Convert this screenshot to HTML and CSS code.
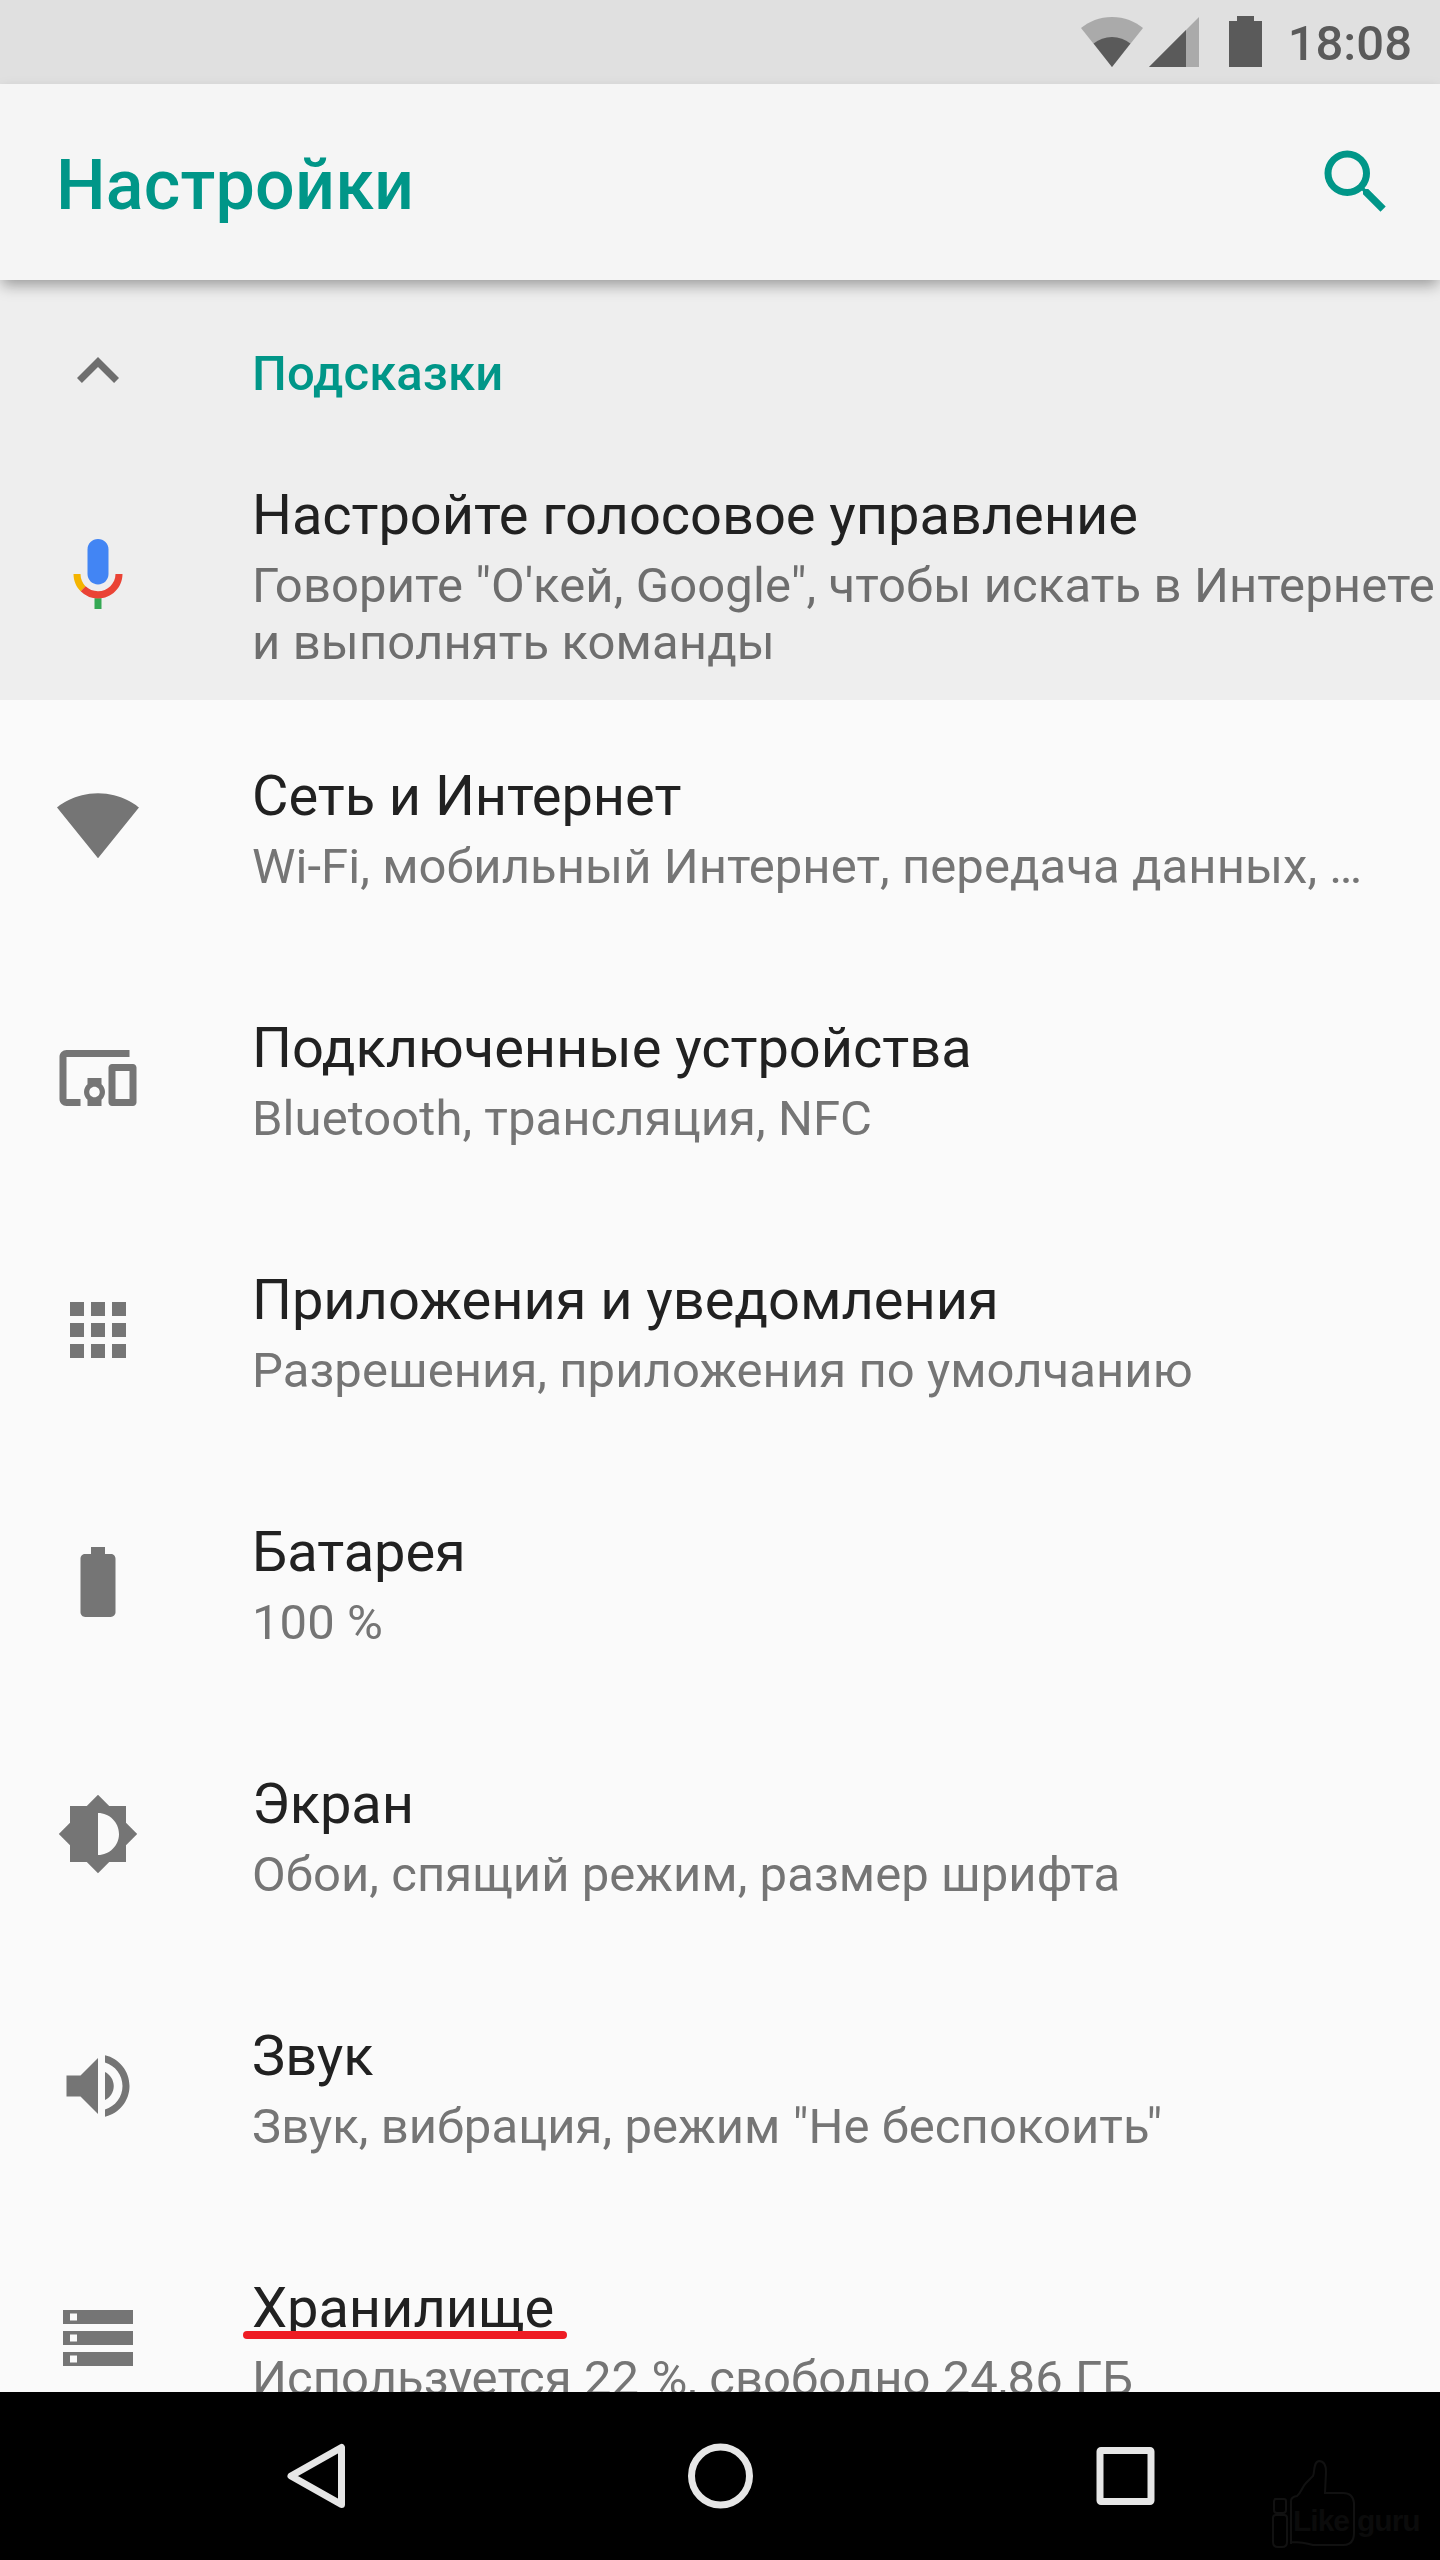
FILE: index.html
```html
<!DOCTYPE html>
<html lang="ru">
<head>
<meta charset="utf-8">
<title>Настройки</title>
<link rel="stylesheet" href="styles.css">
</head>
<body>
<div class="screen">
  <div class="status">
    <svg class="status-wifi" viewBox="0 0 62 50"><path class="dim" d="M31 50L0 11C8 4.500 18.500 0 31 0s23 4.500 31 11z"/><path d="M31 50L12.600 26.500C18 22.300 24 20 31 20s13 2.300 18.400 6.500z"/></svg>
    <svg class="status-cell" viewBox="0 0 50 50"><path class="dim" d="M0 50L50 0v50z"/><path d="M0 50L37 13v37z"/></svg>
    <svg class="status-battery" viewBox="0 0 33 51"><path d="M0 5h8V0h17v5h8v46H0z"/></svg>
    <span class="clock">18:08</span>
  </div>
  <header class="appbar">
    <h1 class="appbar-title">Настройки</h1>
    <svg class="icon search" viewBox="0 0 24 24"><path d="M15.500 14h-.79l-.28-.27A6.471 6.471 0 0 0 16 9.500 6.500 6.500 0 1 0 9.500 16c1.610 0 3.090-.59 4.230-1.570l.27.28v.79l5 4.990L20.490 19l-4.990-5zm-6 0C7.010 14 5 11.990 5 9.500S7.010 5 9.500 5 14 7.010 14 9.500 11.990 14 9.500 14z"/></svg>
  </header>
  <main class="content">
    <section class="tips">
      <div class="tips-head">
        <svg class="icon" viewBox="0 0 24 24"><path d="M12 8l-6 6 1.410 1.410L12 10.830l4.590 4.580L18 14z"/></svg>
        <h2 class="tips-title">Подсказки</h2>
      </div>
      <div class="tip">
        <svg class="icon" viewBox="0 0 24 24">
          <path fill="#4285f4" d="M12 15c1.660 0 3-1.310 3-2.970V4.970C15 3.310 13.660 2 12 2S9 3.310 9 4.970v7.060C9 13.690 10.340 15 12 15z"/>
          <path fill="#34a853" d="M11 18.900h2V22h-2z"/>
          <path fill="#f4b400" d="M7 12H5c0 1.930.78 3.680 2.050 4.950l1.410-1.410C7.560 14.630 7 13.380 7 12z"/>
          <path fill="#ea4335" d="M12 16.930c-1.380 0-2.630-.5-3.540-1.410l-1.410 1.410A6.990 6.990 0 0 0 12 19c3.870 0 7-3.130 7-7h-2c0 2.700-2.240 4.930-5 4.930z"/>
        </svg>
        <div class="text">
          <div class="title">Настройте голосовое управление</div>
          <div class="summary">Говорите "О'кей, Google", чтобы искать в Интернете<br>и выполнять команды</div>
        </div>
      </div>
    </section>
    <div class="row">
      <svg class="icon" viewBox="0 0 24 24"><path d="M12 21.200L23.700 6.700C23.200 6.300 18.700 2.650 12 2.650S.8 6.300.3 6.700z"/></svg>
      <div class="text"><div class="title">Сеть и Интернет</div><div class="summary">Wi-Fi, мобильный Интернет, передача данных, …</div></div>
    </div>
    <div class="row">
      <svg class="icon" viewBox="0 0 24 24"><path d="M3 6h18V4H3c-1.100 0-2 .9-2 2v12c0 1.100.9 2 2 2h4v-2H3V6zm10 6H9v1.780c-.61.55-1 1.330-1 2.220s.39 1.670 1 2.220V20h4v-1.780c.61-.55 1-1.340 1-2.220s-.39-1.670-1-2.220V12zm-2 5.500c-.83 0-1.500-.67-1.500-1.500s.67-1.500 1.500-1.500 1.500.67 1.500 1.500-.67 1.500-1.500 1.500zM22 8h-6c-.5 0-1 .5-1 1v10c0 .5.5 1 1 1h6c.5 0 1-.5 1-1V9c0-.5-.5-1-1-1zm-1 10h-4v-8h4v8z"/></svg>
      <div class="text"><div class="title">Подключенные устройства</div><div class="summary">Bluetooth, трансляция, NFC</div></div>
    </div>
    <div class="row">
      <svg class="icon" viewBox="0 0 24 24"><path d="M4 8h4V4H4v4zm6 12h4v-4h-4v4zm-6 0h4v-4H4v4zm0-6h4v-4H4v4zm6 0h4v-4h-4v4zm6-10v4h4V4h-4zm-6 4h4V4h-4v4zm6 6h4v-4h-4v4zm0 6h4v-4h-4v4z"/></svg>
      <div class="text"><div class="title">Приложения и уведомления</div><div class="summary">Разрешения, приложения по умолчанию</div></div>
    </div>
    <div class="row">
      <svg class="icon" viewBox="0 0 24 24"><path d="M15.670 4H14V2h-4v2H8.330C7.600 4 7 4.600 7 5.330v15.330C7 21.400 7.600 22 8.330 22h7.330c.74 0 1.340-.6 1.340-1.330V5.330C17 4.600 16.400 4 15.670 4z"/></svg>
      <div class="text"><div class="title">Батарея</div><div class="summary">100 %</div></div>
    </div>
    <div class="row">
      <svg class="icon" viewBox="0 0 24 24"><path d="M20 15.200L23.200 12 20 8.800V4h-4.800L12 .8 8.800 4H4v4.800L.8 12 4 15.200V20h4.800l3.200 3.200 3.200-3.200H20v-4.800zM12 18V6c3.310 0 6 2.690 6 6s-2.690 6-6 6z"/></svg>
      <div class="text"><div class="title">Экран</div><div class="summary">Обои, спящий режим, размер шрифта</div></div>
    </div>
    <div class="row">
      <svg class="icon" viewBox="0 0 24 24"><path d="M3 9v6h4l5 5V4L7 9H3zm13.500 3c0-1.770-1.020-3.290-2.500-4.030v8.050c1.480-.73 2.500-2.250 2.500-4.020zM14 3.230v2.060c2.890.86 5 3.540 5 6.710s-2.110 5.850-5 6.710v2.060c4.010-.91 7-4.490 7-8.770s-2.990-7.860-7-8.770z"/></svg>
      <div class="text"><div class="title">Звук</div><div class="summary">Звук, вибрация, режим "Не беспокоить"</div></div>
    </div>
    <div class="row">
      <svg class="icon" viewBox="0 0 24 24"><path d="M2 20h20v-4H2v4zm2-3h2v2H4v-2zM2 4v4h20V4H2zm4 3H4V5h2v2zm-4 7h20v-4H2v4zm2-3h2v2H4v-2z"/></svg>
      <div class="text"><div class="title marked">Хранилище</div><div class="summary">Используется 22 %, свободно 24,86 ГБ</div></div>
    </div>
  </main>
  <nav class="navbar">
    <svg class="nav-icon" viewBox="0 0 70 70"><path d="M61.500 6.500v57L11 35z"/></svg>
    <svg class="nav-icon" viewBox="0 0 70 70"><circle cx="35.500" cy="35" r="29"/></svg>
    <svg class="nav-icon" viewBox="0 0 70 70"><rect x="10" y="9.500" width="51" height="51" rx="1"/></svg>
    <div class="watermark">
      <svg class="thumb" viewBox="0 0 84 90"><path d="M20 85V42q0-4 6-5c4-3 5-9 9-13l7-7c2-4 0-14 6-15 6 0 7 6 7 11l-1 21h18q10 0 11 10v30q0 12-11 12H42q-10-3-22-3zM4 40h9q2 0 2 2v9q0 3-3 3H6q-3 0-3-3v-9zM5 56h8q3 0 3 3v24q0 5-5 5H7q-5 0-5-5V59q0-3 3-3z"/></svg>
      <span class="mark-like">Like</span><span class="mark-guru">guru</span>
    </div>
  </nav>
</div>
</body>
</html>
```
FILE: styles.css
```css
* { box-sizing: border-box; }
body { margin: 0; font-family: Roboto, "Noto Sans", sans-serif; background: #fafafa; }
h1, h2 { margin: 0; }
svg { display: block; flex: none; }

.screen { width: 1440px; height: 2560px; display: flex; flex-direction: column; overflow: hidden; }

.status { height: 84px; flex: none; background: #e0e0e0; display: flex; align-items: flex-start; justify-content: flex-end; padding: 0 28px 0 0; fill: #5a5a5a; }
.status .dim { fill: #aaa; }
.status-wifi { width: 62px; height: 50px; margin-top: 17px; }
.status-cell { width: 50px; height: 50px; margin: 17px 0 0 6px; }
.status-battery { width: 33px; height: 51px; margin: 16px 26px 0 30px; }
.clock { font-size: 49px; line-height: 58px; font-weight: 500; color: #5a5a5a; margin-top: 15px; }

.appbar { height: 196px; flex: none; background: #f5f5f5; display: flex; align-items: center; justify-content: space-between; padding: 0 42px 0 56px; z-index: 1; box-shadow: 0 7px 14px -2px rgba(0, 0, 0, .36); }
.appbar-title { font-size: 70px; line-height: 82px; font-weight: 500; letter-spacing: .2px; color: #009688; padding-top: 6px; }

.icon { width: 84px; height: 84px; fill: #757575; }
.search { fill: #009688; }

.content { flex: 1; min-height: 0; overflow: hidden; }
.tips { height: 420px; background: #eee; }
.tips .icon { fill: #6e6e6e; }
.tips-head { height: 182px; display: flex; align-items: center; padding-left: 56px; gap: 112px; }
.tips-title { font-size: 49px; line-height: 58px; font-weight: 500; letter-spacing: .1px; color: #009688; padding-top: 5px; }
.tip { height: 238px; display: flex; align-items: flex-start; padding: 20px 0 0 56px; gap: 112px; }
.tip .icon { margin-top: 50px; }

.row { height: 252px; display: flex; align-items: flex-start; padding: 63px 0 0 56px; gap: 112px; }
.row .icon { margin-top: 21px; }
.text { white-space: nowrap; }
.title { font-size: 56px; line-height: 66px; letter-spacing: -.05px; color: #212121; margin-bottom: 9px; }
.summary { font-size: 49px; line-height: 57px; letter-spacing: .06px; color: #757575; }
.tips .summary { letter-spacing: .11px; color: #6e6e6e; }

/* highlighted entry: a marker line drawn over the descenders */
.marked { position: relative; }
.marked::after { content: ""; position: absolute; left: -9px; top: 56px; width: 324px; height: 8px; border-radius: 4px; background: #ee1c24; }

.navbar { height: 168px; flex: none; background: #000; display: grid; grid-template-columns: repeat(3, 405px); justify-content: center; align-items: center; justify-items: center; position: relative; }
.nav-icon { width: 70px; height: 70px; fill: none; stroke: #e6e6e6; stroke-width: 7; stroke-linejoin: round; }

.watermark { position: absolute; left: 1271px; top: 67px; display: flex; font: bold 30px/36px "Liberation Sans", Arial, sans-serif; color: #0b0b0b; padding: 44px 0 0 22px; gap: 8px; letter-spacing: -1px; }
.thumb { position: absolute; left: 0; top: 0; width: 84px; height: 90px; fill: none; stroke: #111; stroke-width: 2; }
```
